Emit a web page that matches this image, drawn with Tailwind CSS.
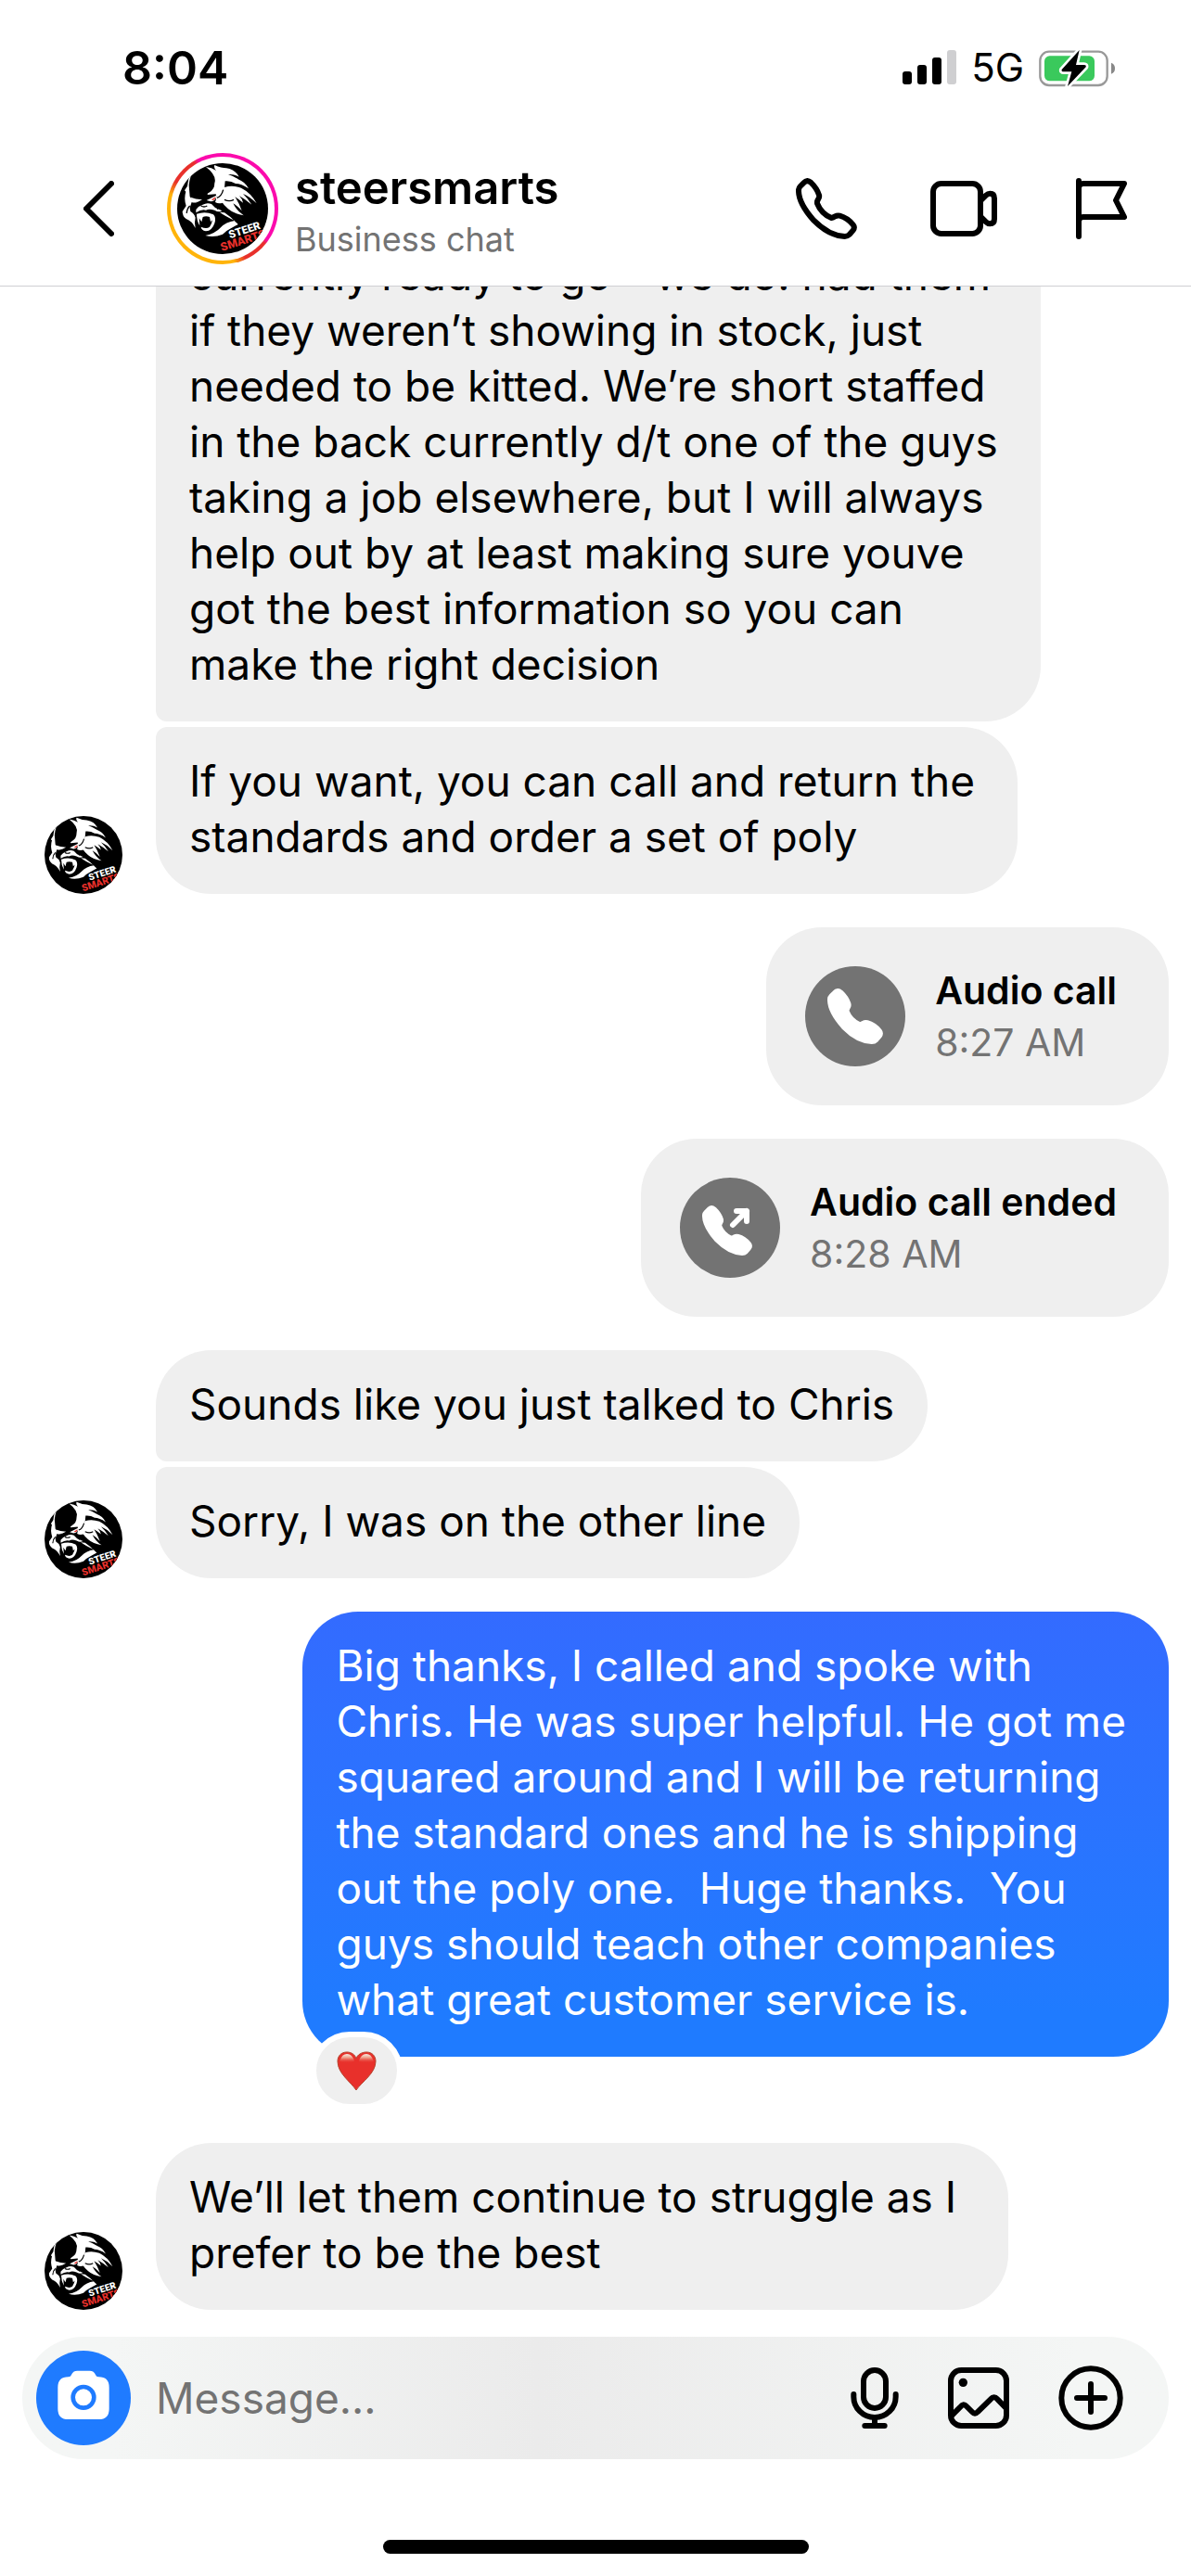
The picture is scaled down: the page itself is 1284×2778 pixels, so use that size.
<!DOCTYPE html>
<html lang="en">
<head>
<meta charset="utf-8">
<meta name="viewport" content="width=device-width, initial-scale=1">
<title>steersmarts</title>
<script src="https://cdn.jsdelivr.net/npm/@tailwindcss/browser@4"></script>
</head>
<body class="bg-white text-black font-['Inter',sans-serif]">
<svg class="hidden" aria-hidden="true">
  <symbol id="avatar" viewBox="93 78 294 294">
    <circle cx="240" cy="225" r="150" fill="#000"/>
    <g fill="#fff">
      <path d="M186 90Q205 92 219 102Q210 90 214 84Q236 94 252 94Q280 98 293 122Q276 112 258 114Q276 120 290 130Q312 138 324 160Q300 144 282 144Q266 134 248 136L246 158Q252 184 240 206Q226 210 216 204Q222 190 218 178L192 180Q188 177 196 173Q214 164 214 142Q222 118 186 90Z"/>
      <path d="M246 156Q272 148 300 158Q332 174 350 208Q328 186 306 177Q322 192 334 212Q312 194 294 184Q304 194 306 206Q292 194 280 187Q294 208 302 232Q288 216 274 208Q284 230 308 247Q276 242 258 226Q244 214 238 204Q244 180 246 156Z"/>
      <path d="M151 88Q134 118 131 150L134 186Q142 200 160 203Q148 208 140 204L134 222L136 234Q148 240 152 254Q148 268 152 288Q140 264 122 258Q110 250 110 234L122 216Q114 192 121 170L117 166L126 152Q130 112 151 88Z"/>
      <path d="M136 188Q152 194 174 196L160 203Q144 204 136 188Z"/>
      <path d="M188 198L220 182Q220 200 202 202Z"/>
      <path d="M154 228Q162 216 176 212Q190 204 204 210L216 222L238 232Q228 238 214 230Q196 224 186 230Q172 226 154 238Z"/>
      <path d="M156 242Q184 232 210 244Q220 254 214 272Q206 296 186 298Q170 294 170 284Q188 292 198 284Q206 272 207 262L201 268L198 252Q186 248 176 252L172 268L164 256L166 280Q156 264 156 242Z"/>
      <path d="M230 236Q246 248 280 264Q250 268 234 286Q216 306 184 312Q212 320 240 308Q252 296 268 288L290 276Q268 252 246 238Z"/>
    </g>
    <path d="M204 196L217 187Q217 197 208 198Z" fill="#e8302b"/>
    <path d="M170 216Q180 222 190 216M222 226L240 214M222 190Q236 186 242 164M246 196Q262 204 276 196M134 216Q124 226 124 240" stroke="#000" stroke-width="4" fill="none"/>
    <g font-family="Roboto, sans-serif" font-weight="900" stroke="#000" stroke-width="5" paint-order="stroke">
      <text x="264" y="322" font-size="35" fill="#fff" transform="rotate(-18 264 322)">STEER</text>
      <text x="238" y="363" font-size="37" fill="#e8302b" transform="rotate(-18 238 363)">SMARTS</text>
    </g>
  </symbol>
  <symbol id="handset" viewBox="178 575 198 198">
    <path stroke="currentColor" stroke-width="18" stroke-linejoin="round" d="M203 591Q214 579 226 589Q246 608 253 630Q255 637 250 644Q246 650 247 657Q260 690 293 704Q299 703 305 699Q312 695 320 697Q345 704 363 726Q370 735 363 744L351 758Q345 764 336 764Q285 762 236 712Q188 658 187 618Q186 608 192 602Z"/>
  </symbol>
</svg>

<div class="flex h-screen flex-col overflow-hidden">
  <header class="shrink-0 border-b border-[#cfcfd3]">
    <div class="flex items-center justify-between pt-[38px] pr-[82px] pl-[132px]">
      <time class="text-[50px] leading-[70px] font-semibold">8:04</time>
      <div class="flex items-center gap-4">
        <svg class="h-[38px] w-[58px]" viewBox="0 0 58 38" role="img" aria-label="Signal">
          <rect x="0" y="23" width="10" height="14" rx="3"/><rect x="16" y="16" width="10" height="21" rx="3"/><rect x="32" y="8" width="10" height="29" rx="3"/><rect x="48" y="0" width="10" height="37" rx="3" fill="#cfcfd1"/>
        </svg>
        <span class="text-[42px] leading-[70px]">5G</span>
        <svg class="h-[41px] w-[82px]" viewBox="960 155 246 123" role="img" aria-label="Battery charging">
          <rect x="964" y="163" width="217" height="109" rx="29" fill="none" stroke="#999" stroke-width="7"/>
          <rect x="978" y="177" width="162" height="81" rx="17" fill="#3ac95c"/>
          <path d="M1194 199Q1206 204 1206 217Q1206 230 1194 235Z" fill="#888"/>
          <path d="M1091 158L1034 221Q1032 228 1040 228H1066L1053 275L1112 213Q1114 206 1106 206H1080Z" stroke="#fff" stroke-width="16" stroke-linejoin="round" paint-order="stroke"/>
        </svg>
      </div>
    </div>
    <div class="flex items-center pt-[57px] pr-[61px] pb-[23px] pl-[90px]">
      <button aria-label="Back" class="shrink-0"><svg class="h-[60px] w-[33px]" viewBox="0 0 33 60" fill="none" stroke="currentColor" stroke-width="6" stroke-linecap="round" stroke-linejoin="round"><path d="M30 3L3 30L30 57"/></svg></button>
      <a href="#" class="ml-[57px] flex items-center gap-[18px]">
        <span class="flex size-[120px] items-center justify-center rounded-full bg-[conic-gradient(#fb0aac_0deg,#fb0aac_125deg,#e8302b_130deg,#e8302b_155deg,#ffb40a_168deg,#ffb40a_285deg,#e8302b_300deg,#e8302b_328deg,#fb0aac_334deg)]">
          <span class="flex size-[112px] items-center justify-center rounded-full bg-white"><svg class="size-[98px] rounded-full" role="img" aria-label="steersmarts"><use href="#avatar"/></svg></span>
        </span>
        <span class="flex flex-col pt-1">
          <span class="text-[49px] leading-[62px] font-semibold">steersmarts</span>
          <span class="text-[36px] leading-[48px] text-[#737373]">Business chat</span>
        </span>
      </a>
      <div class="ml-auto flex items-center gap-[76px]">
        <button aria-label="Audio call" class="flex size-[72px] items-center justify-center"><svg class="size-[66px]" fill="none"><use href="#handset"/></svg></button>
        <button aria-label="Video call" class="flex size-[72px] items-center justify-center"><svg class="h-[60px] w-[72px]" viewBox="609 585 216 180" fill="none" stroke="currentColor" stroke-width="18"><rect x="618" y="594" width="153" height="162" rx="26"/><path d="M771 650L789 632Q795 626 802 626Q816 626 816 642V708Q816 724 802 724Q795 724 789 718L771 700"/></svg></button>
        <button aria-label="Flag" class="flex size-[72px] items-center justify-center"><svg class="h-[66px] w-[55px]" viewBox="1077 576 165 198" fill="none" stroke="currentColor" stroke-width="18" stroke-linecap="round" stroke-linejoin="round"><path d="M1086 585V765M1086 608Q1086 594 1100 594H1233L1206 648L1233 702H1100Q1086 702 1086 716"/></svg></button>
      </div>
    </div>
  </header>

  <main class="flex min-h-0 flex-1 flex-col justify-end gap-9 overflow-hidden pr-6 pb-[29px] pl-12 text-[46px] leading-[60px]">
    <section class="flex items-end gap-9">
      <svg class="size-[84px] shrink-0 rounded-full" role="img" aria-label="steersmarts"><use href="#avatar"/></svg>
      <div class="flex flex-col items-start gap-1.5">
        <p class="rounded-[60px] rounded-bl-xl bg-[#efefef] pt-7 pr-[46px] pb-8 pl-9">currently ready to go - we do! had them<br>if they weren’t showing in stock, just<br>needed to be kitted. We’re short staffed<br>in the back currently d/t one of the guys<br>taking a job elsewhere, but I will always<br>help out by at least making sure youve<br>got the best information so you can<br>make the right decision</p>
        <p class="rounded-[60px] rounded-tl-xl bg-[#efefef] pt-7 pr-[46px] pb-8 pl-9">If you want, you can call and return the<br>standards and order a set of poly</p>
      </div>
    </section>

    <button class="flex items-center gap-8 self-end rounded-[60px] bg-[#efefef] py-10 pr-14 pl-[42px] text-left">
      <span class="flex size-[108px] items-center justify-center rounded-full bg-[#737373] text-white"><svg class="size-[60px]" fill="currentColor"><use href="#handset"/></svg></span>
      <span class="flex flex-col text-[41px] leading-[56px]"><span class="font-semibold">Audio call</span><span class="text-[#737373]">8:27 AM</span></span>
    </button>
    <button class="flex items-center gap-8 self-end rounded-[60px] bg-[#efefef] py-10 pr-14 pl-[42px] text-left">
      <span class="flex size-[108px] items-center justify-center rounded-full bg-[#737373] text-white"><svg class="size-[60px]" viewBox="0 0 60 60" fill="currentColor"><use href="#handset" y="6" width="54" height="54"/><path d="M33 27L48 12M37 12H48V23" fill="none" stroke="currentColor" stroke-width="6" stroke-linecap="round" stroke-linejoin="round"/></svg></span>
      <span class="flex flex-col text-[41px] leading-[56px]"><span class="font-semibold">Audio call ended</span><span class="text-[#737373]">8:28 AM</span></span>
    </button>

    <section class="flex items-end gap-9">
      <svg class="size-[84px] shrink-0 rounded-full" role="img" aria-label="steersmarts"><use href="#avatar"/></svg>
      <div class="flex flex-col items-start gap-1.5">
        <p class="rounded-[60px] rounded-bl-xl bg-[#efefef] px-9 pt-7 pb-8">Sounds like you just talked to Chris</p>
        <p class="rounded-[60px] rounded-tl-xl bg-[#efefef] px-9 pt-7 pb-8">Sorry, I was on the other line</p>
      </div>
    </section>

    <section class="relative mb-[57px] self-end">
      <p class="rounded-[60px] bg-linear-to-b from-[#336bff] to-[#1f7bff] to-90% pt-7 pr-[46px] pb-8 pl-9 whitespace-pre-wrap text-white">Big thanks, I called and spoke with
Chris. He was super helpful. He got me
squared around and I will be returning
the standard ones and he is shipping
out the poly one.  Huge thanks.  You
guys should teach other companies
what great customer service is.</p>
      <button aria-label="Loved" class="absolute -bottom-[57px] left-[9px] flex h-[84px] w-[99px] items-center justify-center rounded-[42px] border-6 border-white bg-[#efefef]">
        <svg class="size-[43px]" viewBox="0 0 43 43">
          <defs><linearGradient id="shine" x1="0" y1="0" x2="0" y2="1"><stop offset="0" stop-color="#f6efe4"/><stop offset="0.4" stop-color="#eea08a"/><stop offset="1" stop-color="#e8302b" stop-opacity="0"/></linearGradient></defs>
          <path d="M21 42C15 33 1 24 1 11C1 5 5 1 11 1C16 1 20 4 21 8C22 4 27 1 32 1C38 1 42 5 42 11C42 24 27 33 21 42Z" fill="#e8302b" stroke="#b5452f"/>
          <path d="M4 9Q6 3 11 3Q17 3 19 11Q11 15 3 11ZM24 11Q26 3 32 3Q37 3 39 9L40 11Q32 15 24 11Z" fill="url(#shine)"/>
        </svg>
      </button>
    </section>

    <section class="flex items-end gap-9">
      <svg class="size-[84px] shrink-0 rounded-full" role="img" aria-label="steersmarts"><use href="#avatar"/></svg>
      <p class="rounded-[60px] bg-[#efefef] pt-7 pr-14 pb-8 pl-9">We’ll let them continue to struggle as I<br>prefer to be the best</p>
    </section>
  </main>

  <footer class="shrink-0 px-6 pb-6">
    <form class="flex h-[132px] items-center rounded-full bg-linear-to-r from-[#f4f6f5] from-8% via-[#ebebeb] via-45% to-[#f4f6f5] to-92% pr-[49px] pl-[15px]">
      <button type="button" aria-label="Camera" class="shrink-0"><svg class="size-[102px]" viewBox="117 165 306 306"><circle cx="270" cy="318" r="153" fill="#1f7bff"/><path d="M187 284Q187 250 221 250Q229 250 231 243Q236 230 250 230H290Q304 230 309 243Q311 250 319 250Q353 250 353 284V353Q353 387 319 387H221Q187 387 187 353Z" fill="#fff"/><circle cx="270" cy="316" r="34" fill="#fff" stroke="#1f7bff" stroke-width="14"/></svg></button>
      <input type="text" aria-label="Message" placeholder="Message..." class="ml-[27px] min-w-0 flex-1 bg-transparent text-[46px] leading-[60px] outline-none placeholder:text-[#737373]">
      <div class="flex shrink-0 items-center gap-[53px]">
        <button type="button" aria-label="Voice message"><svg class="h-[66px] w-[52px]" viewBox="168 159 156 198" fill="none" stroke="currentColor" stroke-width="18" stroke-linecap="round"><rect x="210" y="168" width="72" height="123" rx="36"/><path d="M178 246V254a68 67 0 0 0 136 0V246M246 321V348M214 348H278"/></svg></button>
        <button type="button" aria-label="Photos"><svg class="size-[66px]" viewBox="489 159 198 198" fill="none" stroke="currentColor" stroke-width="18"><rect x="498" y="168" width="180" height="180" rx="34"/><circle cx="538" cy="208" r="14" fill="currentColor" stroke="none"/><path d="M500 316L530 286Q539 274 549 285L567 303Q576 313 585 303L627 262Q638 250 649 262L676 290"/></svg></button>
        <button type="button" aria-label="More"><svg class="size-[70px]" viewBox="843 153 210 210" fill="none" stroke="currentColor" stroke-width="18" stroke-linecap="round"><circle cx="948" cy="258" r="95"/><path d="M903 258H993M948 213V303"/></svg></button>
      </div>
    </form>
    <div class="mx-auto mt-[87px] h-[15px] w-[459px] rounded-full bg-black"></div>
  </footer>
</div>
</body>
</html>
